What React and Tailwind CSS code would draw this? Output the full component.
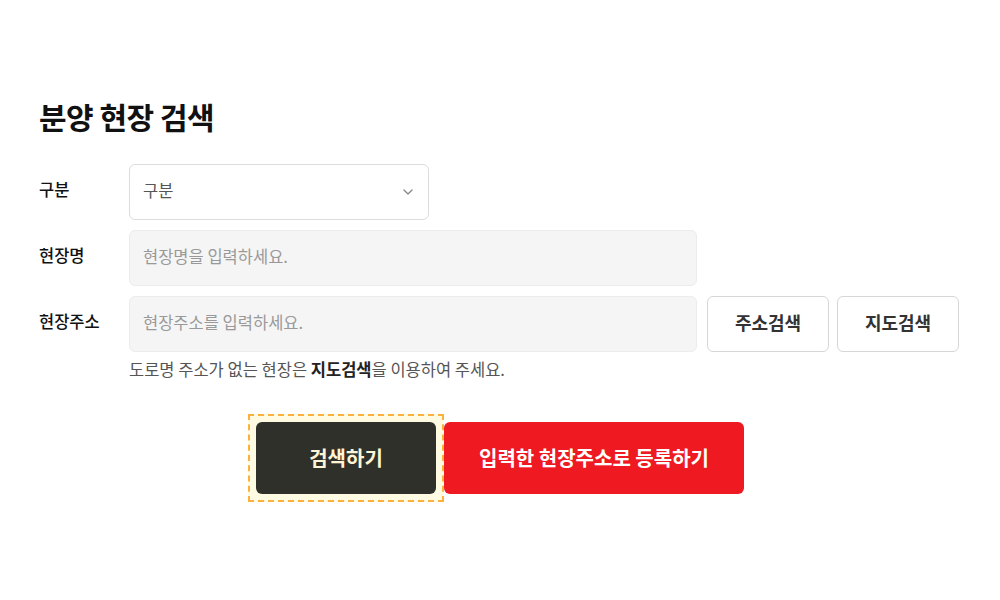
import { ChevronDown } from 'lucide-react'

const font = { fontFamily: '"Noto Sans CJK KR", "Noto Sans", sans-serif' }

function Row({ label, children }) {
  return (
    <div className="flex items-start">
      <div className="w-[90px] h-14 pb-[6px] flex items-center text-[16.5px] font-medium text-[#111]">{label}</div>
      {children}
    </div>
  )
}

export default function App() {
  return (
    <div style={font} className="w-[1000px] h-[600px] bg-white px-[39px] pt-[96px]">
      <h1 className="text-[30px] leading-[40px] font-bold text-[#111] tracking-[-0.5px]">분양 현장 검색</h1>

      <div className="mt-[28px] flex flex-col gap-[10px]">
        <Row label="구분">
          <div className="w-[300px] h-14 rounded-md border border-[#dcdcdc] bg-white flex items-center justify-between pl-[13px] pr-[12px]">
            <span className="text-[16.5px] text-[#555] pb-[4px]">구분</span>
            <ChevronDown size={16} strokeWidth={2} className="text-[#888]" />
          </div>
        </Row>

        <Row label="현장명">
          <div className="w-[568px] h-14 rounded-md border border-[#ececec] bg-[#f5f5f5] flex items-center px-[13px] pb-[4px]">
            <span className="text-[16.5px] text-[#999]">현장명을 입력하세요.</span>
          </div>
        </Row>

        <div>
          <Row label="현장주소">
            <div className="w-[568px] h-14 rounded-md border border-[#ececec] bg-[#f5f5f5] flex items-center px-[13px] pb-[4px]">
              <span className="text-[16.5px] text-[#999]">현장주소를 입력하세요.</span>
            </div>
            <button className="ml-[10px] w-[122px] h-14 pb-[3px] rounded-md border border-[#d6d6d6] bg-white text-[18px] font-bold text-[#333]">주소검색</button>
            <button className="ml-[8px] w-[122px] h-14 pb-[3px] rounded-md border border-[#d6d6d6] bg-white text-[18px] font-bold text-[#333]">지도검색</button>
          </Row>
          <p className="ml-[90px] mt-[5px] text-[16.5px] text-[#555]">
            도로명 주소가 없는 현장은 <b className="font-bold text-[#222]">지도검색</b>을 이용하여 주세요.
          </p>
        </div>
      </div>

      <div className="mt-[40px] flex justify-center gap-2">
        <div className="-m-[8px] p-[6px] border-2 border-dashed border-[#fbb13c] bg-[#fffbe3]">
          <button className="block w-[180px] h-[72px] rounded-md bg-[#30302a] text-[#fdf5d6] text-[20px] font-bold">검색하기</button>
        </div>
        <button className="w-[300px] h-[72px] rounded-md bg-[#ee1921] text-white text-[20px] font-bold">입력한 현장주소로 등록하기</button>
      </div>
    </div>
  )
}
